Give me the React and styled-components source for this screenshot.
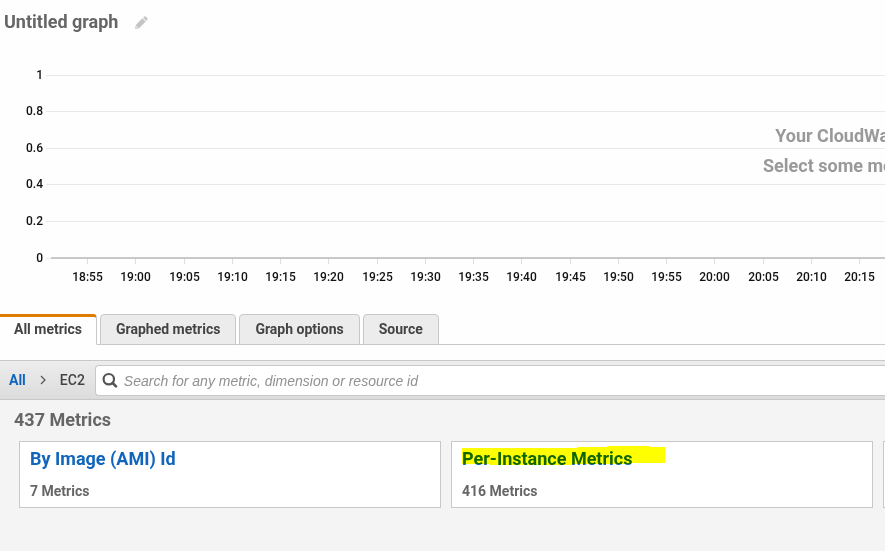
import React from "react";
import styled, { createGlobalStyle } from "styled-components";

const GlobalStyle = createGlobalStyle`
  *, *::before, *::after { box-sizing: border-box; }
  body {
    margin: 0;
    background: #fefefe;
    color: #444;
    font-family: Roboto, "Liberation Sans", sans-serif;
  }
`;

const Page = styled.div`
  min-height: 100vh;
  display: flex;
  flex-direction: column;
  overflow: hidden;
`;

const Header = styled.header`
  display: flex;
  align-items: center;
  gap: 17px;
  height: 44px;
  padding: 0 4px;
`;

const Title = styled.h1`
  margin: 0;
  font-size: 18px;
  line-height: 24px;
  font-weight: 700;
  color: #666;
`;

const IconButton = styled.button`
  display: flex;
  padding: 2px 0 0;
  border: 0;
  background: none;
  cursor: pointer;
`;

const ChartArea = styled.section`
  position: relative;
  height: 270px;
  overflow: hidden;
`;

const Chart = styled.svg`
  display: block;
  width: 100%;
  height: 100%;
  font-size: 12px;
  font-weight: 500;
  fill: #111;
`;

const EmptyMessage = styled.p`
  position: absolute;
  top: 77px;
  left: 763px;
  margin: 0;
  font-size: 18px;
  line-height: 30px;
  font-weight: 700;
  color: #999;
  text-align: center;
  white-space: nowrap;
`;

const Tabs = styled.nav`
  display: flex;
  height: 31px;
  border-bottom: 1px solid #c8c8c8;
`;

const Tab = styled.button`
  height: 31px;
  margin-right: 3px;
  padding: 0 15px 2px;
  border: 1px solid #c8c8c8;
  border-radius: 4px 4px 0 0;
  background: #ececec;
  color: #444;
  font: 700 14px/20px Roboto, "Liberation Sans", sans-serif;
  cursor: pointer;

  &[aria-selected="true"] {
    padding: 0 14px 4px;
    border-top: 3px solid #e07b00;
    border-left: 0;
    border-bottom-color: #fefefe;
    border-top-left-radius: 0;
    background: #fefefe;
  }
`;

const Toolbar = styled.div`
  display: flex;
  align-items: center;
  height: 40px;
  margin-top: 15px;
  padding-left: 9px;
  border-top: 1px solid #c8c8c8;
  border-bottom: 1px solid #c8c8c8;
  background: linear-gradient(#ededed, #dcdcdc);
`;

const Breadcrumb = styled.nav`
  display: flex;
  align-items: center;
  gap: 12px;
  margin-right: 10px;
  font-size: 14px;
  line-height: 20px;
  font-weight: 500;
`;

const Link = styled.a`
  color: #1166bb;
  font-weight: 700;
  text-decoration: none;
`;

const SearchBox = styled.label`
  display: flex;
  align-items: center;
  flex: 1;
  gap: 6px;
  height: 31px;
  padding-left: 6px;
  border: 1px solid #c8c8c8;
  border-right: 0;
  border-radius: 4px 0 0 4px;
  background: #fff;
`;

const SearchInput = styled.input`
  flex: 1;
  min-width: 0;
  padding: 2px 0 0;
  border: 0;
  outline: 0;
  background: transparent;
  color: #444;
  font: italic 14px/20px "Liberation Sans", Arial, sans-serif;

  &::placeholder { color: #919191; opacity: 1; }
`;

const Results = styled.main`
  flex: 1;
  padding: 8px 0 0 14px;
  background: #f4f4f4;
`;

const ResultsTitle = styled.h2`
  margin: 0 0 9px;
  font-size: 18px;
  line-height: 24px;
  font-weight: 700;
  color: #666;
`;

const Cards = styled.div`
  display: grid;
  grid-auto-flow: column;
  grid-auto-columns: 422px;
  gap: 10px;
  padding-left: 5px;
`;

const Card = styled.article`
  min-height: 67px;
  padding: 5px 10px;
  border: 1px solid #c8c8c8;
  background: #fff;
`;

const CardTitle = styled.h3`
  position: relative;
  margin: 0;
  font-size: 18px;
  line-height: 24px;
`;

const Count = styled.p`
  margin: 10px 0 0;
  font-size: 14px;
  line-height: 20px;
  font-weight: 700;
  color: #666;
`;

const Marker = styled.svg`
  position: absolute;
  top: -1px;
  left: 0;
  mix-blend-mode: multiply;
  pointer-events: none;
`;

const levels = [
  ["1", 31], ["0.8", 67], ["0.6", 104], ["0.4", 140], ["0.2", 177], ["0", 214],
];
const times = [
  "18:55", "19:00", "19:05", "19:10", "19:15", "19:20", "19:25", "19:30", "19:35",
  "19:40", "19:45", "19:50", "19:55", "20:00", "20:05", "20:10", "20:15",
];
const timeX = (i) => Math.round(87 + (i * 193) / 4);

const tabs = ["All metrics", "Graphed metrics", "Graph options", "Source"];

const groups = [
  { name: "By Image (AMI) Id", count: "7 Metrics" },
  { name: "Per-Instance Metrics", count: "416 Metrics", marked: true },
];

export default function App() {
  return (
    <>
      <GlobalStyle />
      <Page>
        <Header>
          <Title>Untitled graph</Title>
          <IconButton aria-label="Rename graph">
            <svg width="13" height="14" viewBox="0 0 13 14" fill="#c4c4c4">
              <path d="M.8 9 7.4 2.3l3.3 3.3-6.6 6.6-4 .9zM8.1 1.6 9.4.5q.7-.5 1.3 0l1.8 1.8q.5.7 0 1.3l-1.2 1.3z" />
              <path d="M1.5 10.1l1.3 1.3-1 .3-.6-.6z" fill="#fefefe" />
            </svg>
          </IconButton>
        </Header>

        <ChartArea>
          <Chart role="img" aria-label="Empty metrics graph">
            {levels.map(([label, y]) => (
              <g key={label}>
                <line x1="46" x2="100%" y1={y + 0.5} y2={y + 0.5} stroke="#e9e9e9" />
                <text x="43" y={y + 4} textAnchor="end">{label}</text>
              </g>
            ))}
            {times.map((label, i) => (
              <g key={label}>
                <line x1={timeX(i) + 0.5} x2={timeX(i) + 0.5} y1="215" y2="220" stroke="#dedede" />
                <text x={timeX(i) + 0.5} y="237" textAnchor="middle">{label}</text>
              </g>
            ))}
            <line x1="51" x2="100%" y1="214" y2="214" stroke="#c8c8c8" strokeWidth="2" />
          </Chart>
          <EmptyMessage>
            Your CloudWatch graph is empty.
            <br />
            Select some metrics to appear here.
          </EmptyMessage>
        </ChartArea>

        <Tabs role="tablist">
          {tabs.map((name, i) => (
            <Tab key={name} role="tab" aria-selected={i === 0}>{name}</Tab>
          ))}
        </Tabs>

        <Toolbar>
          <Breadcrumb aria-label="Breadcrumb">
            <Link href="#all">All</Link>
            <svg width="10" height="10" viewBox="0 0 10 10" fill="none" stroke="#555" strokeWidth="1.2">
              <path d="M3 1l4 4-4 4" />
            </svg>
            <span>EC2</span>
          </Breadcrumb>
          <SearchBox>
            <svg width="16" height="16" viewBox="0 0 16 16" fill="none" stroke="#555" strokeWidth="2.2">
              <circle cx="6.8" cy="7.2" r="5.2" />
              <path d="M10.6 11l3.4 3.4" strokeWidth="2.6" strokeLinecap="round" />
            </svg>
            <SearchInput
              type="text"
              aria-label="Search metrics"
              placeholder="Search for any metric, dimension or resource id"
            />
          </SearchBox>
        </Toolbar>

        <Results>
          <ResultsTitle>437 Metrics</ResultsTitle>
          <Cards>
            {groups.map((group) => (
              <Card key={group.name}>
                <CardTitle>
                  <Link href="#group">{group.name}</Link>
                  {group.marked && (
                    <Marker width="204" height="20" viewBox="0 0 204 20" fill="#ff0" aria-hidden="true">
                      <path d="M0 2H115V1H145V0H188V1H203V17H169V18H110V19H27V18H0z" />
                    </Marker>
                  )}
                </CardTitle>
                <Count>{group.count}</Count>
              </Card>
            ))}
            <Card />
          </Cards>
        </Results>
      </Page>
    </>
  );
}
